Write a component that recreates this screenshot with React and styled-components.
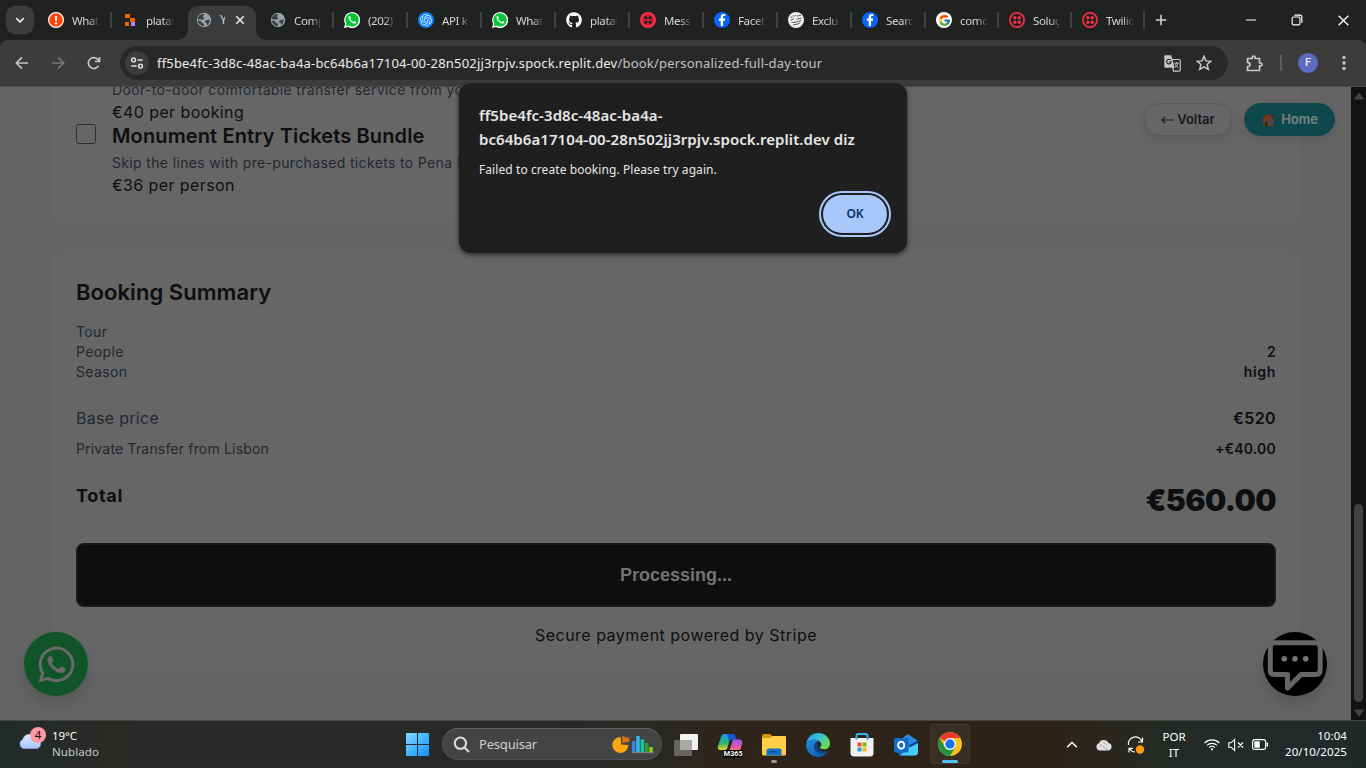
import React from 'react';
import styled, { createGlobalStyle, css } from 'styled-components';
import { FaWhatsapp, FaGithub, FaFacebookF } from 'react-icons/fa';
import { FcGoogle } from 'react-icons/fc';
import { SiOpenai } from 'react-icons/si';

const Global = createGlobalStyle`
  * { box-sizing: border-box; }
  body { margin: 0; background: #202221; overflow: hidden; }
  p, h2, h3 { margin: 0; }
  svg { display: block; flex: none; }
`;

const uiFont = '"Noto Sans", "Open Sans", sans-serif';
const pageFont = 'Inter, "Liberation Sans", sans-serif';

const Desktop = styled.div`
  position: relative;
  width: 1366px;
  height: 768px;
  display: flex;
  flex-direction: column;
  overflow: hidden;
  font-family: ${uiFont};
`;

/* ---------- tab strip ---------- */
const TabStrip = styled.header`
  height: 40px;
  flex: none;
  display: flex;
  background: #202221;
  padding-left: 6px;
`;
const TabSearch = styled.div`
  width: 28px;
  height: 28px;
  margin: 6px 4px 0 0;
  border-radius: 9px;
  background: #3c3c3c;
  display: grid;
  place-items: center;
`;
const Tab = styled.div`
  width: ${(p) => p.$w || 74}px;
  height: 40px;
  display: flex;
  align-items: center;
  padding-left: 10px;
  gap: 8px;
`;
const TabTitle = styled.span`
  width: 28px;
  flex: none;
  overflow: hidden;
  white-space: nowrap;
  font-size: 11.5px;
  line-height: 18px;
  letter-spacing: -0.35px;
  color: #d4d4d4;
  margin-top: 1px;
  mask-image: linear-gradient(90deg, #000 60%, transparent 100%);
`;
const Divider = styled.i`
  width: 2px;
  height: 16px;
  background: #3f4040;
  margin-left: auto;
`;
const ActiveTab = styled.div`
  width: 68px;
  height: 34px;
  margin: 6px 4px 0 2px;
  border-radius: 10px 10px 0 0;
  background: #3c3c3c;
  display: flex;
  align-items: center;
  padding: 0 11px 6px 8px;
  position: relative;
  &::before, &::after {
    content: '';
    position: absolute;
    bottom: 0;
    width: 10px;
    height: 10px;
  }
  &::before { left: -10px; background: radial-gradient(circle at 0 0, transparent 9.5px, #3c3c3c 10px); }
  &::after { right: -10px; background: radial-gradient(circle at 100% 0, transparent 9.5px, #3c3c3c 10px); }
`;
const ActiveTitle = styled.span`
  width: 5px;
  margin: 0 auto 0 8px;
  overflow: hidden;
  white-space: nowrap;
  font-size: 12px;
  line-height: 18px;
  color: #d4d4d4;
`;
const Round = styled.span`
  width: 16px;
  height: 16px;
  flex: none;
  border-radius: 50%;
  background: ${(p) => p.$bg};
  display: grid;
  place-items: center;
  overflow: hidden;
`;
const NewTab = styled.div`
  width: 32px;
  display: grid;
  place-items: center;
`;
const WindowButtons = styled.div`
  display: flex;
  margin-left: auto;
  > span { width: 46px; display: grid; place-items: center; }
`;

/* ---------- toolbar ---------- */
const ToolbarWrap = styled.div`
  background: #202221;
  flex: none;
`;
const Toolbar = styled.div`
  height: 47px;
  background: #3c3c3c;
  border-radius: 8px 8px 0 0;
  border-bottom: 1px solid #4a4a4a;
  display: flex;
  align-items: center;
  padding: 0 4px;
`;
const ToolButton = styled.span`
  width: ${(p) => p.$w || 36}px;
  display: grid;
  place-items: center;
`;
const ToolDivider = styled.i`
  width: 2px;
  height: 16px;
  background: #5c5c5c;
`;
const Omnibox = styled.div`
  width: 1108px;
  height: 34px;
  margin-left: 8px;
  border-radius: 17px;
  background: #282828;
  display: flex;
  align-items: center;
  padding: 0 8px 0 5px;
`;
const SiteInfo = styled.span`
  width: 24px;
  height: 24px;
  border-radius: 50%;
  background: #3c3c3c;
  display: grid;
  place-items: center;
  margin-right: 8px;
`;
const Url = styled.span`
  font-size: 13px;
  line-height: 20px;
  white-space: nowrap;
  margin-right: auto;
  color: #ececec;
  letter-spacing: 0.18px;
  em { font-style: normal; color: #c4c4c4; letter-spacing: 0.21px; }
`;
const Avatar = styled.span`
  width: 20px;
  height: 20px;
  border-radius: 50%;
  background: #5c6bc0;
  color: #e8eaf6;
  font: 500 11px/20px Roboto, sans-serif;
  text-align: center;
`;

/* ---------- page ---------- */
const Viewport = styled.div`
  height: 633px;
  flex: none;
  display: flex;
  background: #121212;
`;
const Page = styled.main`
  width: 1351px;
  height: 633px;
  overflow: hidden;
  background: #646464;
  font-family: ${pageFont};
  color: #0e0f10;
  padding: 0 51px 0 52px;
`;
const Card = styled.section`
  display: flex;
  flex-direction: column;
  background: #666;
  padding: ${(p) => (p.$first ? '0 24px 24px' : '24px')};
  border-radius: ${(p) => (p.$first ? '0 0 8px 8px' : '8px')};
  height: ${(p) => (p.$first ? 135 : 419)}px;
  margin-bottom: 31px;
`;
const AddOn = styled.div`
  display: grid;
  grid-template-columns: 20px 1fr;
  column-gap: 16px;
  ${(p) => p.$cut && css`margin-top: -8px;`}
`;
const Checkbox = styled.span`
  width: 20px;
  height: 20px;
  border: 1px solid #2e2e2e;
  border-radius: 2.5px;
`;
const AddOnName = styled.h3`
  font-size: 20px;
  line-height: 25px;
  font-weight: 600;
  letter-spacing: 0.13px;
  margin-bottom: 4px;
`;
const Note = styled.p`
  font-size: 14px;
  line-height: ${(p) => p.$lh || 20}px;
  letter-spacing: ${(p) => p.$ls ?? 0.38}px;
  color: #24282f;
  white-space: nowrap;
`;
const Price = styled.p`
  font-size: 16px;
  line-height: 24px;
  letter-spacing: 0.4px;
`;
const SummaryTitle = styled.h2`
  font-size: 22px;
  line-height: 30px;
  font-weight: 600;
  letter-spacing: 0.06px;
  margin-bottom: 15px;
`;
const Row = styled.div`
  display: flex;
  justify-content: space-between;
  font-size: ${(p) => (p.$big ? 16 : 14)}px;
  line-height: ${(p) => (p.$big ? 24 : 20)}px;
  margin-top: ${(p) => p.$gap || 0}px;
  color: #24282f;
  letter-spacing: ${(p) => p.$ls ?? 0.35}px;
  b { font-weight: 600; color: #0e0f10; letter-spacing: ${(p) => p.$vls ?? 0.2}px; }
`;
const TotalRow = styled.div`
  display: flex;
  justify-content: space-between;
  margin-top: 23px;
  font-weight: 700;
  > span { font-size: 18px; line-height: 28px; letter-spacing: 0.65px; }
  > b { font-size: 30px; line-height: 36px; letter-spacing: -0.55px; }
`;
const PayButton = styled.div`
  height: 64px;
  margin-top: 25px;
  border: 2px solid #191919;
  border-radius: 8px;
  background: #0e0e0e;
  color: #737373;
  font: 700 18px/60px "Liberation Sans", Arial, sans-serif;
  text-align: center;
`;
const Secure = styled.p`
  margin-top: 16px;
  font-size: 16px;
  line-height: 24px;
  letter-spacing: 0.49px;
  text-align: center;
`;
const ScrollTrack = styled.div`
  width: 15px;
  display: flex;
  flex-direction: column;
  align-items: center;
  padding: 5px 0 3px;
  justify-content: space-between;
`;
const Thumb = styled.div`
  width: 9px;
  height: 198px;
  border-radius: 5px;
  background: #424242;
  margin: auto 0 7px;
`;

const TopActions = styled.div`
  position: absolute;
  right: 31px;
  top: 103px;
  display: flex;
  gap: 12px;
  font: 600 13px/31px ${pageFont};
`;
const Pill = styled.span`
  width: ${(p) => (p.$home ? 91 : 88)}px;
  height: 33px;
  border-radius: 17px;
  border: 1px solid ${(p) => (p.$home ? '#0c484c' : '#595959')};
  background: ${(p) => (p.$home ? '#0c484c' : '#666')};
  color: ${(p) => (p.$home ? '#737d7e' : '#17191f')};
  font-weight: ${(p) => (p.$home ? 700 : 600)};
  box-shadow: 0 4px 10px rgba(0, 0, 0, 0.09);
  display: flex;
  align-items: center;
  justify-content: center;
  gap: ${(p) => (p.$home ? 6 : 3)}px;
  letter-spacing: ${(p) => (p.$home ? -0.25 : 0)}px;
`;
const Floating = styled.div`
  position: absolute;
  top: 632px;
  left: ${(p) => (p.$left ? 24 : 1263)}px;
  width: 64px;
  height: 64px;
  border-radius: 50%;
  background: ${(p) => (p.$left ? '#0f5527' : '#000')};
  box-shadow: 0 8px 14px rgba(0, 0, 0, 0.13);
  display: grid;
  place-items: center;
  color: #6a6a6a;
`;

/* ---------- dialog ---------- */
const Dialog = styled.div`
  position: absolute;
  left: 459px;
  top: 83px;
  width: 448px;
  height: 170px;
  border-radius: 12px;
  background: #1f1f1f;
  box-shadow: 0 0 0 1px rgba(70, 70, 70, 0.55), 0 2px 5px rgba(0, 0, 0, 0.55);
  padding: 20px 18px 18px 20px;
  display: flex;
  flex-direction: column;
  color: #e6e6e6;
`;
const DialogTitle = styled.h2`
  font-size: 15px;
  line-height: 24px;
  font-weight: 600;
  letter-spacing: 0.07px;
`;
const DialogText = styled.p`
  font-size: 12px;
  line-height: 20px;
  letter-spacing: 0.08px;
  margin-top: 9px;
`;
const OkButton = styled.span`
  width: 64px;
  height: 38px;
  margin: 15px 2px 0 auto;
  border-radius: 20px;
  background: #a8c7fa;
  outline: 2px solid #a8c7fa;
  outline-offset: 2px;
  color: #062e6f;
  font-size: 12px;
  font-weight: 600;
  line-height: 38px;
  text-align: center;
`;

/* ---------- taskbar ---------- */
const Taskbar = styled.footer`
  height: 48px;
  flex: none;
  display: flex;
  border-top: 1px solid #434544;
  background: linear-gradient(90deg, #222b2a 0, #2a2a27 8%, #272a27 15%, #272a28 33%, #292926 47%, #2e2419 55%, #2d2217 76%, #262923 84%, #232a29 90%, #222a29 100%);
  color: #fff;
`;
const Weather = styled.div`
  width: 395px;
  padding: 6px 0 0 18px;
  display: flex;
  gap: 6px;
  font-size: 11.5px;
  line-height: 16px;
  letter-spacing: -0.1px;
  > div { padding-top: 1px; }
  span { display: block; color: #c9c9c9; letter-spacing: 0.1px; }
`;
const Slot = styled.div`
  width: ${(p) => p.$w || 44}px;
  display: flex;
  align-items: center;
  justify-content: center;
  position: relative;
`;
const AppSlot = styled(Slot)`
  ${(p) => p.$active && css`
    width: 40px;
    height: 40px;
    margin: 3px 2px 0;
    border-radius: 4px;
    background: rgba(255, 255, 255, 0.055);
    border: 1px solid rgba(255, 255, 255, 0.05);
  `}
  ${(p) => p.$mark && css`
    &::after {
      content: '';
      position: absolute;
      bottom: ${p.$active ? 0 : 5}px;
      width: ${p.$active ? 16 : 6}px;
      height: 3px;
      border-radius: 2px;
      background: ${p.$active ? '#4cc2ff' : '#9b9a98'};
    }
  `}
`;
const SearchBox = styled.div`
  width: 220px;
  height: 32px;
  margin: 7px 2px 0 3px;
  border-radius: 16px;
  background: #434544;
  border: 1px solid #515352;
  border-top-color: #636564;
  display: flex;
  align-items: center;
  padding: 0 7px 0 10px;
  font-size: 13px;
  letter-spacing: -0.19px;
  color: #cfcfcf;
  > span { margin: 0 auto 0 9px; }
`;
const Tray = styled.div`
  margin-left: auto;
  display: flex;
  padding-right: 19px;
  font-size: 11.5px;
  line-height: 16px;
`;
const Stack = styled.div`
  width: ${(p) => p.$w}px;
  padding-top: ${(p) => p.$pt || 7}px;
  text-align: ${(p) => p.$align || 'center'};
  margin-right: ${(p) => p.$mr || 0}px;
  letter-spacing: ${(p) => p.$ls || 0}px;
`;

/* ---------- icons ---------- */
const Line = ({ d, s = 16, w = 1.6, c = '#c7c7c7', v = '0 0 16 16', children }) => (
  <svg width={s} height={s} viewBox={v} fill="none" stroke={c} strokeWidth={w}>
    {d && <path d={d} />}
    {children}
  </svg>
);
const Globe = () => (
  <svg width="16" height="16" viewBox="0 0 16 16">
    <circle cx="8" cy="8" r="7.2" fill="#9aa0a6" />
    <path d="M8.3 2.2 6.8 4.6 8.2 6.4 7.4 7.6H4.6L1.9 7.2C1.6 4.6 4.4 1.6 8.3 2.2Z" fill="#3d4146" />
    <path d="M1.8 8.3 4.9 9.2 6.3 11.2 8 11.6V14.2C4.4 14 2 11.4 1.8 8.3ZM9.7 8.2 13.4 7.6C14.2 9.3 13 12 11.1 13.1L10.6 10.9 8.8 10Z" fill="#3d4146" />
  </svg>
);
const WaTab = () => (
  <svg width="16" height="16" viewBox="0 0 16 16">
    <path d="M0 16 1.1 11.8A8 8 0 1 1 4.2 15Z" fill="#fff" />
    <path d="M1.7 14.4 2.5 11.6A6.7 6.7 0 1 1 4.6 13.6Z" fill="#06c638" />
    <path d="M5.3 4.1C4.5 4.7 4.2 5.6 4.7 6.8 5.5 9.1 7.4 10.9 9.8 11.6 10.9 11.9 12.1 11.1 12.1 9.9L10.3 9 9.4 10C7.9 9.5 6.9 8.4 6.2 7L6.9 6.1 6.2 4.2Z" fill="#fff" />
  </svg>
);
const TwilioTab = ({ plain }) => (
  <svg width="16" height="16" viewBox="0 0 16 16">
    <circle cx="8" cy="8" r={plain ? 8 : 7.1} fill={plain ? '#f22f46' : 'none'} stroke="#f22f46" strokeWidth={plain ? 0 : 1.8} />
    {plain && <circle cx="8" cy="8" r="6" fill="#d61f3a" />}
    {[5.8, 10.2].map((x) => [5.8, 10.2].map((y) => <circle key={`${x}${y}`} cx={x} cy={y} r="1.7" fill={plain ? '#26201f' : '#f22f46'} />))}
  </svg>
);
const Alert = () => (
  <svg width="16" height="16" viewBox="0 0 16 16">
    <circle cx="8" cy="8" r="7.4" fill="#ff4500" stroke="#fff" strokeWidth="1.2" />
    <path d="M8 3.8V8.9" stroke="#fff" strokeWidth="2" /><circle cx="8" cy="11.4" r="1.2" fill="#fff" />
  </svg>
);
const Blocks = () => (
  <svg width="16" height="16" viewBox="0 0 16 16">
    <path d="M3 2H8V6H3ZM8 6H13V10H8ZM3 10H7V14H3Z" fill="#f26207" />
    <path d="M9 10H13V14H9Z" fill="#9d8cf5" />
  </svg>
);
const Face = () => (
  <svg width="16" height="16" viewBox="0 0 16 16">
    <circle cx="8" cy="8" r="8" fill="#efefef" />
    <path d="M2.500 6 5 3.500M6 4.500 8 3M9 4 13 3.400M2.500 8.300 6 6.400M8.500 7.200 13.500 6.200M3.500 10.200C6 11 10 9.700 13 8.500M5 12.800C7.500 12.800 10.400 12 12.200 10.600" stroke="#4a4a4a" strokeWidth=".9" fill="none" />
  </svg>
);
const House = () => (
  <svg width="14" height="14" viewBox="0 0 14 14">
    <path d="M2.3 6.4 7.3 2.6 12 7V13H2.3Z" fill="#664230" />
    <path d="M.5 7.6 4.6 1.6 9.8 2.2 13.6 7.6 12.6 8.2 8.4 3.8 2.4 8.4Z" fill="#803020" />
    <path d="M10 1H11.6V4.4L10 2.8Z" fill="#5a2218" />
    <path d="M3.8 8.4H6.6V13H3.8Z" fill="#3d2217" /><path d="M8 8H11V10.4H8Z" fill="#2e4f66" />
  </svg>
);
const WeatherIcon = () => (
  <svg width="28" height="26" viewBox="0 0 28 26">
    <defs><linearGradient id="cl" x1="0" y1="0" x2="0" y2="1"><stop offset="0" stopColor="#dceaff" /><stop offset="1" stopColor="#a9c5f5" /></linearGradient></defs>
    <path d="M5.5 21.500A4.8 4.8 0 0 1 4.8 12.500 7.2 7.2 0 0 1 18 11 5.6 5.6 0 0 1 19.5 21.500Z" fill="url(#cl)" stroke="#8fb1f2" strokeWidth=".6" />
    <circle cx="20" cy="8" r="8" fill="#ff99a4" />
    <text x="20" y="12.2" fontSize="11.5" fontFamily='"Noto Sans"' textAnchor="middle" fill="#1b0d10">4</text>
  </svg>
);
const WindowsLogo = () => (
  <svg width="23" height="23" viewBox="0 0 23 23">
    <defs><linearGradient id="wn" x1="0" y1="0" x2="1" y2="1"><stop offset="0" stopColor="#7fdcff" /><stop offset="1" stopColor="#0f8ffb" /></linearGradient></defs>
    <path d="M0 1a1 1 0 0 1 1-1H11V11H0ZM12 0H22a1 1 0 0 1 1 1V11H12ZM0 12H11V23H1a1 1 0 0 1-1-1ZM12 12H23V22a1 1 0 0 1-1 1H12Z" fill="url(#wn)" />
  </svg>
);
const ChartArt = () => (
  <svg width="42" height="20" viewBox="0 0 42 20">
    <path d="M8.5 3A8 8 0 1 0 16.3 11L9.4 10.5Z" fill="#fca311" />
    <path d="M10.3 2 17.5 4.2A8 8 0 0 1 16.8 8L10.3 8.8Z" fill="#e0701c" />
    <rect x="20" y="7" width="3.4" height="11" fill="#3a86d8" /><rect x="24.2" y="2" width="3.6" height="16" fill="#35b4e8" />
    <rect x="28.6" y="5.5" width="3.6" height="12.5" fill="#1cc5a8" /><rect x="33" y="9" width="3.6" height="9" fill="#2e9e38" />
    <rect x="37.3" y="13" width="3.4" height="5" fill="#a5c81e" /><path d="M20 18.6H41.5" stroke="#8b8d8c" strokeWidth="1" />
  </svg>
);
const TaskView = () => (
  <svg width="24" height="24" viewBox="0 0 24 24">
    <rect x="6" y="1" width="18" height="16" rx="1" fill="#f2f2f2" /><rect x="0" y="7" width="18" height="16" rx="1" fill="#6b6b69" fillOpacity=".9" />
    <path d="M6 7H18V17H6Z" fill="#a9a9a8" />
  </svg>
);
const M365 = () => (
  <svg width="26" height="26" viewBox="0 0 26 26">
    <defs>
      <linearGradient id="ma" x1="0" y1="0" x2="0" y2="1"><stop offset="0" stopColor="#1a9cf0" /><stop offset=".55" stopColor="#22b573" /><stop offset="1" stopColor="#e9d21f" /></linearGradient>
      <linearGradient id="mb" x1="0" y1="0" x2="0" y2="1"><stop offset="0" stopColor="#8c5cf0" /><stop offset=".6" stopColor="#e856a8" /><stop offset="1" stopColor="#f58a4a" /></linearGradient>
    </defs>
    <path d="M7.5 2H17L13 7 10.5 15.5Q10 18 7.5 18H3.5Q0 18 1 14L4 5Q5 2 7.5 2Z" fill="url(#ma)" />
    <path d="M10 2H15.5Q18 2 18.8 5L19.5 7.5H15Q13 7.5 12 10Z" fill="#1b55d6" />
    <path d="M16 7.5H22Q26 7.5 25 12L23.5 17Q22.5 20 20 20H12Z" fill="url(#mb)" />
    <rect x="6.500" y="18" width="19.500" height="7.500" fill="#000" />
    <text x="16.200" y="24.400" fontSize="7.200" fontWeight="700" fontFamily="Roboto" textAnchor="middle" fill="#fff">M365</text>
  </svg>
);
const Folder = () => (
  <svg width="24" height="24" viewBox="0 0 24 24">
    <path d="M0 3Q0 1 2 1H8L10.5 3.5V8H0Z" fill="#d99407" /><path d="M0 6Q0 5 1 5H8L10.5 3H23Q24 3 24 4V21Q24 22.5 22.5 22.5H1.5Q0 22.5 0 21Z" fill="#ffcf48" />
    <path d="M4.5 22.5V17.5Q4.5 15.5 6.5 15.5H17.5Q19.5 15.5 19.5 17.5V22.5Z" fill="#1374c6" /><path d="M8 18.7H16" stroke="#0b4f91" strokeWidth="1.4" />
  </svg>
);
const Edge = () => (
  <svg width="24" height="24" viewBox="0 0 24 24">
    <defs>
      <linearGradient id="ea" x1="0" y1="0" x2="1" y2=".5"><stop offset="0" stopColor="#1f9be0" /><stop offset=".55" stopColor="#35c1d8" /><stop offset="1" stopColor="#6ae04f" /></linearGradient>
      <linearGradient id="eb" x1="0" y1="0" x2="1" y2="1"><stop offset="0" stopColor="#1b8fe0" /><stop offset="1" stopColor="#0c4f9e" /></linearGradient>
    </defs>
    <path d="M.2 11C1 4.500 6 0 12 0 19 0 24 5 24 10.400 24 14 21.500 16.300 18.200 16.300 15.800 16.300 14 15.500 14 14.600 14 14 15.300 13.500 15.300 11.600 15.300 9 12.500 6.800 8.800 6.800 4.500 6.800.9 9 .2 11Z" fill="url(#ea)" />
    <path d="M.1 11.600C.7 8.800 4.500 6.800 8.800 6.800 10.500 6.800 12 7.300 13.100 8 10.200 8.300 8.300 10.700 8.300 13.600 8.300 18 12.500 21 17 20.300 19 20 21 19 22.300 17.700 20.500 21.500 16.600 24 12 24 5 24 0 18.500.1 11.600Z" fill="url(#eb)" />
    <path d="M8.300 13.600C8.300 18 12.500 21 17 20.300 19 20 21 19 22.300 17.700 18 19.800 12.300 17.500 11.700 13.500 11.500 11.800 12.200 10.300 13.700 8.400 10.500 8.100 8.300 10.700 8.300 13.600Z" fill="#0b4287" />
  </svg>
);
const Store = () => (
  <svg width="24" height="24" viewBox="0 0 24 24">
    <path d="M6.500 7V2.500Q6.500 1 8 1H16Q17.500 1 17.500 2.500V7" stroke="#2bb5e8" strokeWidth="2" fill="none" />
    <path d="M.5 5H23.500V20Q23.500 23.500 20 23.500H4Q.5 23.500.5 20Z" fill="#f1f1f1" />
    <path d="M6.500 4.500V6.500M17.500 4.500V6.500" stroke="#1b9ad0" strokeWidth="2" />
    <path d="M7.500 9.500H11.500V13.500H7.500Z" fill="#f04e23" /><path d="M12.500 9.500H16.500V13.500H12.500Z" fill="#7db900" />
    <path d="M7.500 14.500H11.500V18.500H7.500Z" fill="#1fa2e8" /><path d="M12.500 14.500H16.500V18.500H12.500Z" fill="#fdb813" />
  </svg>
);
const Outlook = () => (
  <svg width="24" height="24" viewBox="0 0 24 24">
    <path d="M4 8 14 1.200 24 8V19Q24 22.500 20.500 22.500H7Q4 22.500 4 19Z" fill="#1267c0" />
    <path d="M14 1.200 24 8 10 15V4Z" fill="#2b8be0" /><path d="M24 8.500V19Q24 22.500 20.500 22.500H6L16 13.500Z" fill="#45cdf5" /><path d="M15 12.500 24 7.500V10L16.500 14Z" fill="#0b3f8c" />
    <rect x="0" y="5" width="14.500" height="14.500" rx="1.500" fill="#0f6cc8" />
    <ellipse cx="7.200" cy="12.200" rx="3.100" ry="3.600" fill="none" stroke="#fff" strokeWidth="1.900" />
  </svg>
);
const Chrome = () => (
  <svg width="24" height="24" viewBox="0 0 24 24">
    <circle cx="12" cy="12" r="12" fill="#fbc116" />
    <path d="M12 12 1.610 6A12 12 0 0 1 22.390 6Z" fill="#e33b2e" />
    <path d="M1.610 6A12 12 0 0 0 12 24L17.200 15 12 12 6.800 15Z" fill="#229342" />
    <path d="M12 6H22.390L17.200 15 12 12Z" fill="#fbc116" />
    <circle cx="12" cy="12" r="6" fill="#fff" /><circle cx="12" cy="12" r="4.700" fill="#1a73e8" />
  </svg>
);
const ChatIcon = () => (
  <svg width="64" height="64" viewBox="0 0 64 64" fill="none" stroke="#666" strokeWidth="5" strokeLinejoin="round">
    <path d="M11 10.700H53Q57.200 10.700 57.200 15V38Q57.200 42.500 53 42.500H38L24.500 56V42.500H11Q7.300 42.500 7.300 38V15Q7.300 10.700 11 10.700Z" />
    <g fill="#757575" stroke="none"><circle cx="21.300" cy="26.700" r="2.800" /><circle cx="32" cy="26.700" r="2.800" /><circle cx="42.700" cy="26.700" r="2.800" /></g>
  </svg>
);

const Fb = () => <Round $bg="#0866ff"><FaFacebookF size={12} color="#fff" /></Round>;
const Openai = () => <Round $bg="#0a84ff"><SiOpenai size={12} color="#d8ebff" /></Round>;
const GoogleTab = () => <Round $bg="#fff"><FcGoogle size={13} /></Round>;

const leadTabs = [
  { icon: <Alert />, title: 'What' },
  { icon: <Blocks />, title: 'plataf', bare: true },
];
const restTabs = [
  { icon: <Globe />, title: 'Comp' },
  { icon: <WaTab />, title: '(202)' },
  { icon: <Openai />, title: 'API k' },
  { icon: <WaTab />, title: 'What' },
  { icon: <FaGithub size={16} color="#fff" />, title: 'plataf' },
  { icon: <TwilioTab plain />, title: 'Mess' },
  { icon: <Fb />, title: 'Faceb' },
  { icon: <Face />, title: 'Exclu' },
  { icon: <Fb />, title: 'Searc' },
  { icon: <GoogleTab />, title: 'como', w: 73 },
  { icon: <TwilioTab />, title: 'Soluç', w: 73 },
  { icon: <TwilioTab />, title: 'Twilio', w: 73 },
];
const BrowserTab = ({ icon, title, w, bare }) => (
  <Tab $w={w}>
    {icon}
    <TabTitle>{title}</TabTitle>
    {!bare && <Divider />}
  </Tab>
);

export default function App() {
  return (
    <Desktop>
      <Global />
      <TabStrip>
        <TabSearch><Line s={12} w={2.4} c="#e3e3e3" d="M3 5.500 8 10.500 13 5.500" /></TabSearch>
        {leadTabs.map((t, i) => <BrowserTab key={i} {...t} />)}
        <ActiveTab>
          <Globe />
          <ActiveTitle>Y</ActiveTitle>
          <Line s={10} w={2.600} c="#e3e3e3" d="M2 2 14 14M14 2 2 14" />
        </ActiveTab>
        {restTabs.map((t, i) => <BrowserTab key={i} {...t} />)}
        <NewTab><Line s={12} w={2.100} c="#d0d0d0" d="M8 1V15M1 8H15" /></NewTab>
        <WindowButtons>
          <span><Line s={10} w={1.600} c="#fff" d="M0 8H16" /></span>
          <span>
            <Line s={12} w={1.500} c="#fff"><rect x="1.500" y="4" width="10.500" height="10.500" rx="2" /><path d="M4.500 1.500H11.500Q14.500 1.500 14.500 4.500V11.500" /></Line>
          </span>
          <span><Line s={11} w={1.900} c="#fff" d="M1 1 15 15M15 1 1 15" /></span>
        </WindowButtons>
      </TabStrip>

      <ToolbarWrap>
        <Toolbar>
          <ToolButton><Line s={14} w={1.900} d="M15 8H2M8 1.500 1.500 8 8 14.500" /></ToolButton>
          <ToolButton><Line s={14} w={1.900} c="#777" d="M1 8H14M8 1.500 14.500 8 8 14.500" /></ToolButton>
          <ToolButton><Line s={14} w={1.900} d="M13.200 11A6.200 6.200 0 1 1 12.600 4.200L14 6M14.300 1V6.300H9" /></ToolButton>
          <Omnibox>
            <SiteInfo>
              <Line s={14} w={1.700} c="#e0e0e0"><circle cx="4" cy="4.500" r="2.200" /><path d="M8.500 4.500H14.500M1.500 11.500H7.500" /><circle cx="12" cy="11.500" r="2.200" /></Line>
            </SiteInfo>
            <Url>ff5be4fc-3d8c-48ac-ba4a-bc64b6a17104-00-28n502jj3rpjv.spock.replit.dev<em>/book/personalized-full-day-tour</em></Url>
            <ToolButton $w={32}>
              <svg width="17" height="17" viewBox="0 0 17 17">
                <path d="M7 4.500H15Q16.300 4.500 16.300 5.800V14.800Q16.300 16.100 15 16.100H9.500Z" fill="none" stroke="#c7c7c7" strokeWidth="1.200" />
                <path d="M1.300.3H7.200L10.800 12.800H1.300Q.3 12.800.3 11.800V1.300Q.3.3 1.300.3Z" fill="#c7c7c7" />
                <path d="M6.800 5.200A2.300 2.300 0 1 0 7.200 7H5" stroke="#282828" strokeWidth="1.200" fill="none" />
                <path d="M10.300 8.200H15M12.600 7V8.200M14 8.200Q13.200 11 11 12.300M11.300 9.200Q12.300 11.500 14.500 12.800" stroke="#c7c7c7" strokeWidth="1" fill="none" />
              </svg>
            </ToolButton>
            <ToolButton $w={32}><Line s={16} w={1.500} d="M8 1.300 9.900 5.900 14.900 6.300 11.100 9.500 12.300 14.400 8 11.800 3.700 14.400 4.900 9.500 1.100 6.300 6.100 5.900Z" /></ToolButton>
          </Omnibox>
          <ToolButton $w={52}>
            <Line s={17} w={1.700} v="0 0 17 17" d="M1.500 3.500H6.200V2.600A1.500 1.500 0 0 1 9.200 2.600V3.500H13.500V8H14.600A1.400 1.400 0 0 1 14.600 10.800H13.500V15.500H1.500V11.600Q4 11.200 4 9.400 4 7.600 1.500 7.300Z" />
          </ToolButton>
          <ToolDivider />
          <ToolButton $w={52}><Avatar>F</Avatar></ToolButton>
          <ToolButton $w={20}>
            <svg width="4" height="16" viewBox="0 0 4 16" fill="#c7c7c7"><circle cx="2" cy="2.500" r="1.700" /><circle cx="2" cy="8" r="1.700" /><circle cx="2" cy="13.500" r="1.700" /></svg>
          </ToolButton>
        </Toolbar>
      </ToolbarWrap>

      <Viewport>
        <Page>
          <Card $first>
            <AddOn $cut>
              <span />
              <div>
                <Note $lh={21} $ls={0.34}>Door-to-door comfortable transfer service from your hotel</Note>
                <Price>€40 per booking</Price>
              </div>
            </AddOn>
            <AddOn>
              <Checkbox />
              <div>
                <AddOnName>Monument Entry Tickets Bundle</AddOnName>
                <Note $ls={0.35}>Skip the lines with pre-purchased tickets to Pena Palace</Note>
                <Price>€36 per person</Price>
              </div>
            </AddOn>
          </Card>
          <Card>
            <SummaryTitle>Booking Summary</SummaryTitle>
            <Row><span>Tour</span></Row>
            <Row><span>People</span><b>2</b></Row>
            <Row $vls={0.7}><span>Season</span><b>high</b></Row>
            <Row $big $gap={24} $ls={0.29} $vls={0.4}><span>Base price</span><b>€520</b></Row>
            <Row $gap={9} $ls={0.18}><span>Private Transfer from Lisbon</span><b>+€40.00</b></Row>
            <TotalRow><span>Total</span><b>€560.00</b></TotalRow>
            <PayButton>Processing...</PayButton>
            <Secure>Secure payment powered by Stripe</Secure>
          </Card>
        </Page>
        <ScrollTrack>
          <svg width="10" height="8" viewBox="0 0 10 8"><path d="M5 .8 9.400 7H.6Z" fill="#424242" stroke="#424242" strokeLinejoin="round" /></svg>
          <Thumb />
          <svg width="10" height="8" viewBox="0 0 10 8"><path d="M5 7.200.6 1H9.400Z" fill="#424242" stroke="#424242" strokeLinejoin="round" /></svg>
        </ScrollTrack>
      </Viewport>

      <Taskbar>
        <Weather>
          <WeatherIcon />
          <div style={undefined}>19°C<span>Nublado</span></div>
        </Weather>
        <Slot><WindowsLogo /></Slot>
        <SearchBox>
          <Line s={17} w={1.900} c="#dedede"><circle cx="7" cy="6.800" r="5.300" /><path d="M10.800 10.800 15 15" /></Line>
          <span>Pesquisar</span>
          <ChartArt />
        </SearchBox>
        <AppSlot><TaskView /></AppSlot>
        <AppSlot><M365 /></AppSlot>
        <AppSlot $mark><Folder /></AppSlot>
        <AppSlot><Edge /></AppSlot>
        <AppSlot><Store /></AppSlot>
        <AppSlot><Outlook /></AppSlot>
        <AppSlot $active $mark><Chrome /></AppSlot>
        <Tray>
          <Slot $w={32}><Line s={12} w={1.900} c="#fff" d="M1.500 11 8 4.500 14.500 11" /></Slot>
          <Slot $w={32}>
            <svg width="16" height="12" viewBox="0 0 16 12"><path d="M3.800 11.500A3.700 3.700 0 0 1 3 4.300 5.200 5.200 0 0 1 12.500 4 3.800 3.800 0 0 1 12.300 11.500Z" fill="#e0e0e0" /><path d="M4 5.500 12.500 11.300M7 3.500Q10 4 11 6" stroke="#a8a8a8" strokeWidth="1" fill="none" /></svg>
          </Slot>
          <Slot $w={32}>
            <svg width="18" height="18" viewBox="0 0 18 18" fill="none" stroke="#fff" strokeWidth="1.200">
              <path d="M1.500 9A7 7 0 0 1 15 5.500M15.500 1.500V6H11M2 16.500V12.300H6M2.500 12.500Q4.500 15.800 8 16" /><circle cx="13" cy="13.500" r="4.200" fill="#ff9a0a" stroke="none" />
            </svg>
          </Slot>
          <Stack $w={44} $mr={4} $pt={8}>POR<br />IT</Stack>
          <Slot $w={24}>
            <svg width="16" height="13" viewBox="0 0 16 13" fill="none" stroke="#fff" strokeWidth="1.200"><path d="M.6 5A10.400 10.400 0 0 1 15.400 5M3 7.400A7 7 0 0 1 13 7.400M5.200 9.600A4 4 0 0 1 10.800 9.600" /><circle cx="8" cy="11.300" r="1.100" fill="#fff" stroke="none" /></svg>
          </Slot>
          <Slot $w={24}>
            <svg width="16" height="14" viewBox="0 0 16 14" fill="none" stroke="#fff" strokeWidth="1.100"><path d="M.8 4.800H3L6.600 1.500V12.500L3 9.200H.8ZM10 4.500 15 9.500M15 4.500 10 9.500" /></svg>
          </Slot>
          <Slot $w={24}>
            <svg width="17" height="11" viewBox="0 0 17 11"><rect x=".6" y=".6" width="13" height="9.800" rx="2.200" fill="none" stroke="#fff" strokeWidth="1.100" /><rect x="2.300" y="2.300" width="5.500" height="6.400" rx=".8" fill="#fff" /><path d="M15.300 3.500V7.500" stroke="#fff" strokeWidth="1.600" /></svg>
          </Slot>
          <Stack $w={75} $align="right" $ls={0.08}>10:04<br />20/10/2025</Stack>
        </Tray>
      </Taskbar>

      <TopActions>
        <Pill>
          <svg width="13" height="8" viewBox="0 0 13 8"><path d="M12.500 4H1M4 1 1 4 4 7" fill="none" stroke="#17191f" strokeWidth="1.100" /></svg>
          Voltar
        </Pill>
        <Pill $home><House />Home</Pill>
      </TopActions>
      <Floating $left><FaWhatsapp size={41} /></Floating>
      <Floating><ChatIcon /></Floating>

      <Dialog role="alertdialog">
        <DialogTitle>ff5be4fc-3d8c-48ac-ba4a-<br />bc64b6a17104-00-28n502jj3rpjv.spock.replit.dev diz</DialogTitle>
        <DialogText>Failed to create booking. Please try again.</DialogText>
        <OkButton>OK</OkButton>
      </Dialog>
    </Desktop>
  );
}
